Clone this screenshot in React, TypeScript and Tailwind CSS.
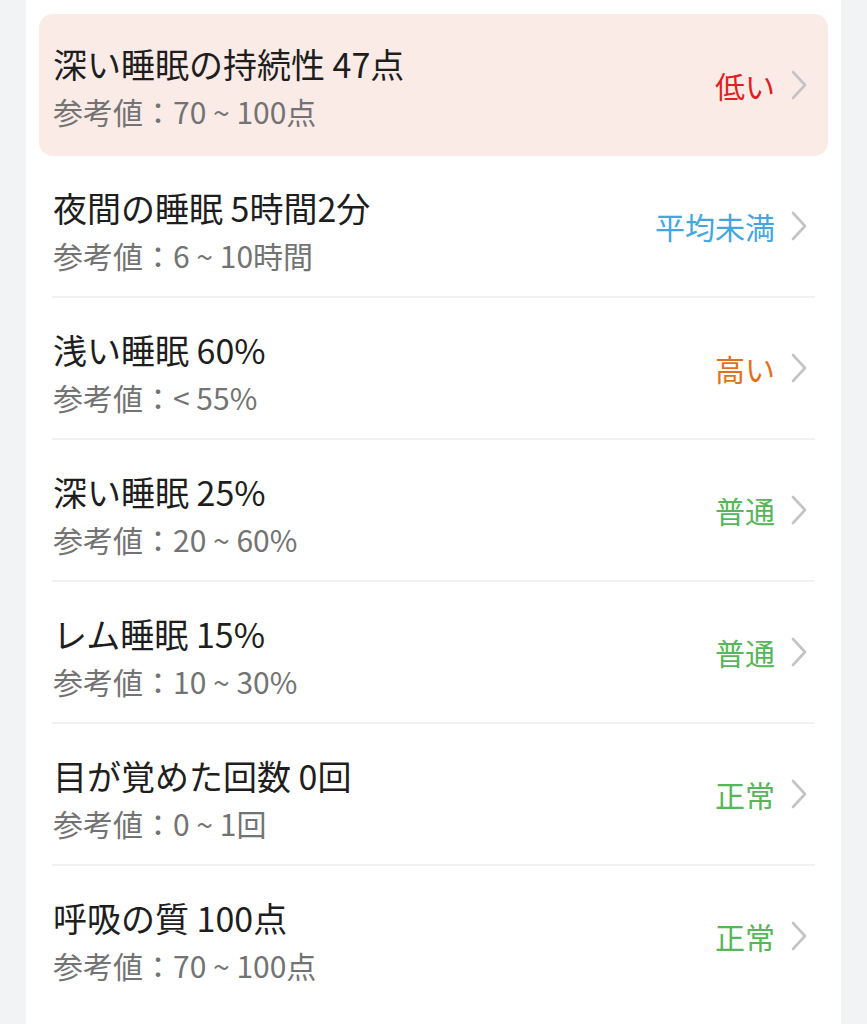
import React from 'react';

type Row = {
  title: string;
  ref: string;
  status: string;
  color: string;
  highlight?: boolean;
};

const rows: Row[] = [
  { title: '深い睡眠の持続性 47点', ref: '参考値：70 ~ 100点', status: '低い', color: 'text-[#e0211f]', highlight: true },
  { title: '夜間の睡眠 5時間2分', ref: '参考値：6 ~ 10時間', status: '平均未満', color: 'text-[#45a6dd]' },
  { title: '浅い睡眠 60%', ref: '参考値：< 55%', status: '高い', color: 'text-[#e2711d]' },
  { title: '深い睡眠 25%', ref: '参考値：20 ~ 60%', status: '普通', color: 'text-[#57b65a]' },
  { title: 'レム睡眠 15%', ref: '参考値：10 ~ 30%', status: '普通', color: 'text-[#57b65a]' },
  { title: '目が覚めた回数 0回', ref: '参考値：0 ~ 1回', status: '正常', color: 'text-[#57b65a]' },
  { title: '呼吸の質 100点', ref: '参考値：70 ~ 100点', status: '正常', color: 'text-[#57b65a]' },
];

const Chevron = () => (
  <svg width="18" height="32" viewBox="0 0 18 32" fill="none" className="shrink-0">
    <path d="M3 3 L15 16 L3 29" stroke="#c4c4c4" strokeWidth="2.6" strokeLinecap="round" strokeLinejoin="round" />
  </svg>
);

export default function App() {
  return (
    <div
      className="w-full min-h-screen bg-[#f2f3f5] px-[26px]"
      style={{ fontFamily: '"Noto Sans CJK JP", "Noto Sans", sans-serif' }}
    >
      <div className="bg-white min-h-screen px-[13px] pt-[14px]">
        {rows.map((r, i) => (
          <div key={i}>
            {i > 1 && <div className="h-[2px] mx-[13px] bg-[#f1f1f3]" />}
            <div
              className={`flex items-center pl-[14px] pr-[20px] ${
                r.highlight ? 'h-[142px] bg-[#fbebe7] rounded-[14px]' : 'h-[140px]'
              }`}
            >
              <div className={`flex-1 min-w-0 ${r.highlight ? 'pt-[3px]' : 'pt-[9px]'}`}>
                <div className="text-[34px] leading-[40px] text-[#1e1e1e] whitespace-nowrap">{r.title}</div>
                <div className="mt-[9px] text-[30px] leading-[36px] text-[#737373] whitespace-pre">{r.ref}</div>
              </div>
              <div className="flex items-center gap-[15px]">
                <span className={`text-[30px] leading-[36px] ${r.color}`}>{r.status}</span>
                <Chevron />
              </div>
            </div>
          </div>
        ))}
      </div>
    </div>
  );
}
